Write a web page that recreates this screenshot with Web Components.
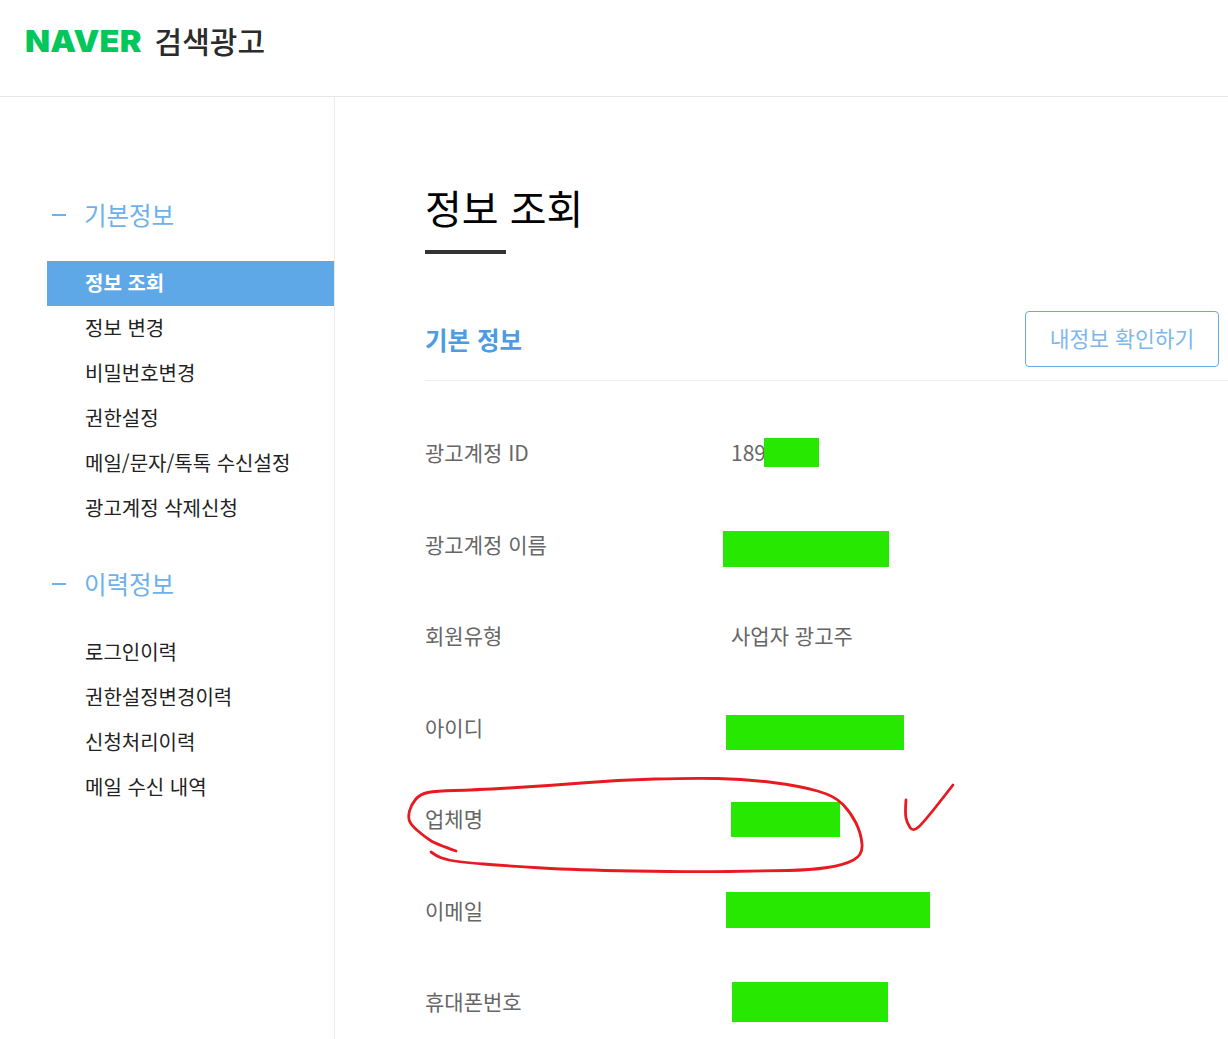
<!DOCTYPE html>
<html lang="ko">
<head>
<meta charset="utf-8">
<title>NAVER 검색광고</title>
<style>
  html, body { margin: 0; background: #fff; }
  body {
    width: 1228px;
    height: 1039px;
    overflow: hidden;
    position: relative;
    font-family: "Noto Sans CJK KR", "Noto Sans", sans-serif;
  }
  .layout { display: flex; height: 942px; }
</style>
</head>
<body>
<ad-header></ad-header>
<div class="layout">
  <side-nav>
    <nav-group label="기본정보">
      <nav-item active>정보 조회</nav-item>
      <nav-item>정보 변경</nav-item>
      <nav-item>비밀번호변경</nav-item>
      <nav-item>권한설정</nav-item>
      <nav-item>메일/문자/톡톡 수신설정</nav-item>
      <nav-item>광고계정 삭제신청</nav-item>
    </nav-group>
    <nav-group label="이력정보">
      <nav-item>로그인이력</nav-item>
      <nav-item>권한설정변경이력</nav-item>
      <nav-item>신청처리이력</nav-item>
      <nav-item>메일 수신 내역</nav-item>
    </nav-group>
  </side-nav>
  <info-page heading="정보 조회">
    <section-head slot="head" action="내정보 확인하기">기본 정보</section-head>
    <info-row label="광고계정 ID">189</info-row>
    <info-row label="광고계정 이름"></info-row>
    <info-row label="회원유형">사업자 광고주</info-row>
    <info-row label="아이디"></info-row>
    <info-row label="업체명"></info-row>
    <info-row label="이메일"></info-row>
    <info-row label="휴대폰번호"></info-row>
  </info-page>
</div>

<!-- 스크린샷 위에 덧칠한 부분 -->
<redact-box x="764" y="438" w="55" h="29"></redact-box>
<redact-box x="723" y="531" w="166" h="36"></redact-box>
<redact-box x="726" y="715" w="178" h="35"></redact-box>
<redact-box x="731" y="802" w="109" h="35"></redact-box>
<redact-box x="726" y="892" w="204" h="36"></redact-box>
<redact-box x="732" y="982" w="156" h="40"></redact-box>
<pen-marks></pen-marks>

<script>
class AdHeader extends HTMLElement {
    constructor() {
        super();
        this.attachShadow({mode: 'open'}).innerHTML = `
<style>
  :host {
    display: flex;
    align-items: center;
    box-sizing: border-box;
    height: 97px;
    padding: 0 0 16px 25px;
    border-bottom: 1px solid #e6e6e6;
  }
  .logo {
    display: inline-block;
    font: 900 30px/1 Inter, sans-serif;
    color: #03c75a;
    letter-spacing: 0.2px;
    margin-top: 2px;
    transform: scaleX(1.085);
    transform-origin: left center;
  }
  .name {
    margin-left: 22px;
    font-size: 30px;
    line-height: 1;
    font-weight: 500;
    color: #2b2b2b;
  }
</style>
<span class="logo">NAVER</span><span class="name">검색광고</span>`;
    }
}

class SideNav extends HTMLElement {
    constructor() {
        super();
        this.attachShadow({mode: 'open'}).innerHTML = `
<style>
  :host {
    display: flex;
    flex-direction: column;
    gap: 33px;
    box-sizing: border-box;
    flex: none;
    width: 335px;
    padding: 98px 0 0 47px;
    border-right: 1px solid #ececec;
  }
</style>
<slot></slot>`;
    }
}

class NavGroup extends HTMLElement {
    constructor() {
        super();
        this.attachShadow({mode: 'open'}).innerHTML = `
<style>
  :host { display: block; }
  .title {
    display: flex;
    align-items: center;
    height: 40px;
    margin-bottom: 26px;
    font-size: 24.5px;
    color: #6db1ec;
  }
  .label { margin-bottom: 2px; }
  .dash {
    width: 14px;
    height: 2px;
    margin: 0 18px 0 5px;
    background: #6db1ec;
  }
</style>
<div class="title"><i class="dash"></i><span class="label"></span></div>
<slot></slot>`;
    }

    connectedCallback() {
        this.shadowRoot.querySelector('.label').textContent = this.getAttribute('label');
    }
}

class NavItem extends HTMLElement {
    constructor() {
        super();
        this.attachShadow({mode: 'open'}).innerHTML = `
<style>
  :host {
    display: flex;
    align-items: center;
    box-sizing: border-box;
    height: 45px;
    padding: 0 0 3px 38px;
    font-size: 20px;
    color: #222;
  }
  :host([active]) {
    background: #5fa8e7;
    color: #fff;
    font-weight: 700;
  }
</style>
<slot></slot>`;
    }
}

class InfoPage extends HTMLElement {
    constructor() {
        super();
        this.attachShadow({mode: 'open'}).innerHTML = `
<style>
  :host {
    display: block;
    flex: 1;
    min-width: 0;
    padding: 83px 0 0 90px;
  }
  h1 {
    margin: 0;
    height: 56px;
    font-size: 40px;
    line-height: 54px;
    font-weight: 400;
    color: #000;
  }
  .bar {
    width: 81px;
    height: 4px;
    margin: 14px 0 57px;
    background: #333;
  }
  .rows { padding-top: 27px; }
</style>
<h1></h1>
<div class="bar"></div>
<slot name="head"></slot>
<div class="rows"><slot></slot></div>`;
    }

    connectedCallback() {
        this.shadowRoot.querySelector('h1').textContent = this.getAttribute('heading');
    }
}

class SectionHead extends HTMLElement {
    constructor() {
        super();
        this.attachShadow({mode: 'open'}).innerHTML = `
<style>
  :host {
    display: flex;
    align-items: center;
    justify-content: space-between;
    box-sizing: border-box;
    height: 70px;
    padding: 0 9px 14px 0;
    border-bottom: 1px solid #eee;
  }
  .title {
    margin-top: 1px;
    font-size: 24.5px;
    font-weight: 700;
    color: #4b9ce2;
  }
  button {
    box-sizing: border-box;
    width: 194px;
    height: 56px;
    padding: 0 0 2px;
    border: 1px solid #64aae8;
    border-radius: 4px;
    background: #fff;
    font: inherit;
    font-size: 21.5px;
    color: #7db8ec;
  }
</style>
<span class="title"><slot></slot></span>
<button type="button"></button>`;
    }

    connectedCallback() {
        this.shadowRoot.querySelector('button').textContent = this.getAttribute('action');
    }
}

class InfoRow extends HTMLElement {
    constructor() {
        super();
        this.attachShadow({mode: 'open'}).innerHTML = `
<style>
  :host {
    display: grid;
    grid-template-columns: 306px 1fr;
    align-items: center;
    box-sizing: border-box;
    height: 91.5px;
    padding-bottom: 3.5px;
    font-size: 21px;
    color: #666;
  }
</style>
<span class="label"></span>
<span><slot></slot></span>`;
    }

    connectedCallback() {
        this.shadowRoot.querySelector('.label').textContent = this.getAttribute('label');
    }
}

// 초록색 가림 박스: 캡처 위에 얹힌 것이라 좌표로 놓는다
class RedactBox extends HTMLElement {
    constructor() {
        super();
        this.attachShadow({mode: 'open'}).innerHTML = `
<style>
  :host { display: block; position: absolute; background: #27e800; }
</style>`;
    }

    connectedCallback() {
        this.style.left = this.getAttribute('x') + 'px';
        this.style.top = this.getAttribute('y') + 'px';
        this.style.width = this.getAttribute('w') + 'px';
        this.style.height = this.getAttribute('h') + 'px';
    }
}

// 빨간 펜 동그라미와 체크 표시
class PenMarks extends HTMLElement {
    constructor() {
        super();
        this.attachShadow({mode: 'open'}).innerHTML = `
<style>
  :host { display: block; position: absolute; inset: 0; pointer-events: none; }
  svg { display: block; }
  path { fill: none; stroke: #e8191f; stroke-width: 2.8; stroke-linecap: round; stroke-linejoin: round; }
</style>
<svg width="1228" height="1039" viewBox="0 0 1228 1039"><path class="circle"/><path class="check"/></svg>`;
    }

    connectedCallback() {
        const circle = [
            [456, 851], [436, 844], [425, 837], [411, 825], [408, 817], [411, 805], [420, 794],
            [436, 791], [473, 790], [545, 786], [618, 780], [691, 778], [745, 779], [800, 786],
            [835, 796], [851, 813], [861, 833], [863, 855], [844, 865], [811, 870], [764, 871],
            [691, 872], [575, 870], [509, 866], [458, 862], [440, 858], [431, 852]
        ];
        const check = [[906, 800], [905, 813], [907, 823], [913, 832], [924, 822], [953, 785]];

        this.shadowRoot.querySelector('.circle').setAttribute('d', this.#smooth(circle));
        this.shadowRoot.querySelector('.check').setAttribute('d', this.#smooth(check));
    }

    #smooth(points) {
        let d = `M${points[0][0]} ${points[0][1]}`;

        for (let i = 1; i < points.length - 1; i++) {
            const midX = (points[i][0] + points[i + 1][0]) / 2;
            const midY = (points[i][1] + points[i + 1][1]) / 2;
            d += ` Q${points[i][0]} ${points[i][1]} ${midX} ${midY}`;
        }

        const last = points[points.length - 1];
        return d + ` L${last[0]} ${last[1]}`;
    }
}

customElements.define('ad-header', AdHeader);
customElements.define('side-nav', SideNav);
customElements.define('nav-group', NavGroup);
customElements.define('nav-item', NavItem);
customElements.define('info-page', InfoPage);
customElements.define('section-head', SectionHead);
customElements.define('info-row', InfoRow);
customElements.define('redact-box', RedactBox);
customElements.define('pen-marks', PenMarks);
</script>
</body>
</html>
